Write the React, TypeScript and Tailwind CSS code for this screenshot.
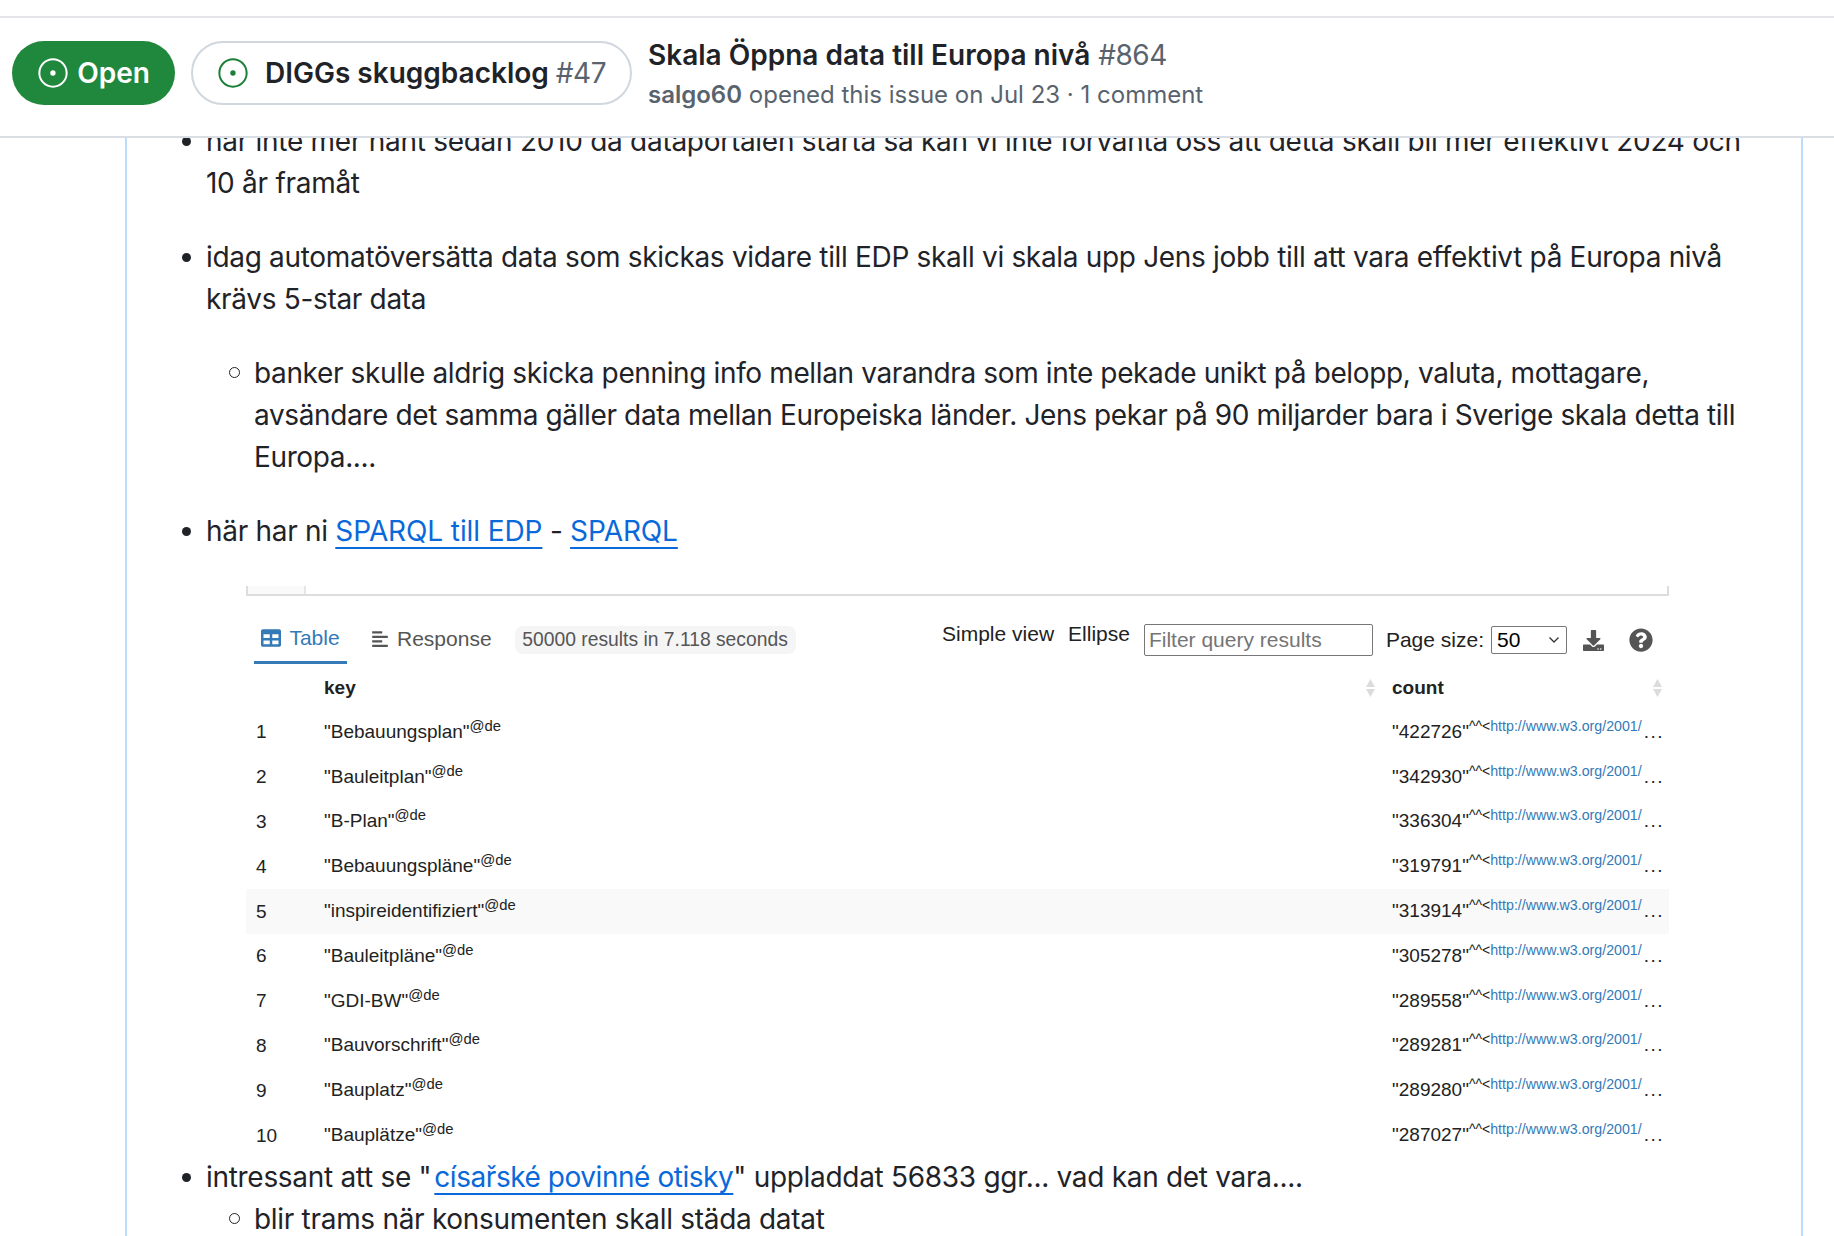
import React from 'react';
import { GoIssueOpened } from 'react-icons/go';
import { FaAlignLeft, FaDownload, FaQuestionCircle, FaTable } from 'react-icons/fa';

const rows = [
  { n: 1, key: 'Bebauungsplan', count: '422726' },
  { n: 2, key: 'Bauleitplan', count: '342930' },
  { n: 3, key: 'B-Plan', count: '336304' },
  { n: 4, key: 'Bebauungspläne', count: '319791' },
  { n: 5, key: 'inspireidentifiziert', count: '313914' },
  { n: 6, key: 'Bauleitpläne', count: '305278' },
  { n: 7, key: 'GDI-BW', count: '289558' },
  { n: 8, key: 'Bauvorschrift', count: '289281' },
  { n: 9, key: 'Bauplatz', count: '289280' },
  { n: 10, key: 'Bauplätze', count: '287027' },
];

const SortIcon = () => (
  <svg width="11" height="20" viewBox="0 0 11 20" className="shrink-0">
    <path d="M5.5 1 L10 9 H1 Z" fill="#dcdcdc" />
    <path d="M5.5 19 L10 11 H1 Z" fill="#dcdcdc" />
  </svg>
);

const ResultsTable = () => (
  <div className="ml-10 mt-[34px] w-[1423px] font-['Liberation_Sans',sans-serif] tracking-normal text-[#222]">
    <div className="flex h-[10px] border-x-2 border-b-2 border-[#dddddd]">
      <div className="w-[58px] border-r-2 border-[#e6e6e6] bg-[#fafafa]" />
    </div>

    <div className="flex h-[70px] items-center pl-2 pr-[16px]">
      <div className="flex h-[68px] w-[93px] items-center justify-center gap-2 self-start border-b-[3px] border-[#337ab7] pt-[18px] text-[21px] text-[#337ab7]">
        <FaTable size={20} />
        <span>Table</span>
      </div>
      <div className="ml-6 flex items-center gap-2 pt-[15px] text-[21px] text-[#555]">
        <FaAlignLeft size={18} />
        <span>Response</span>
      </div>
      <div className="ml-[23px] mt-[18px] flex h-[28px] w-[281px] items-center justify-center rounded-lg bg-[#f5f5f5] text-[19.3px] text-[#555]">
        50000 results in 7.118 seconds
      </div>
      <div className="ml-auto flex items-center pt-[18px]">
        <span className="mb-[12px] text-[21px]">Simple view</span>
        <span className="mb-[12px] ml-[14px] text-[21px]">Ellipse</span>
        <div className="ml-[14px] flex h-[32px] w-[229px] items-center rounded-[2px] border-[1.5px] border-[#777] pl-1 text-[21px] text-[#757575]">
          Filter query results
        </div>
        <span className="ml-[13px] text-[21px]">Page size:</span>
        <div className="ml-[7px] flex h-[28px] w-[76px] items-center justify-between rounded-[2px] border-[1.5px] border-[#777] pl-[5px] pr-[6px] text-[21px] text-black">
          <span>50</span>
          <svg width="12" height="8" viewBox="0 0 12 8" fill="none" stroke="#333" strokeWidth="1.3">
            <path d="M1.5 1.5 L6 6 L10.5 1.5" />
          </svg>
        </div>
        <FaDownload size={21} className="ml-[16px] text-[#555]" />
        <FaQuestionCircle size={24} className="ml-[25px] text-[#555]" />
      </div>
    </div>

    <div className="flex h-[44px] items-center text-[19px] font-bold">
      <div className="w-[78px]" />
      <div className="flex w-[1052px] items-center justify-between">
        <span>key</span>
        <SortIcon />
      </div>
      <div className="ml-[16px] flex w-[271px] items-center justify-between">
        <span>count</span>
        <SortIcon />
      </div>
    </div>

    {rows.map(row => (
      <div key={row.n} className={`flex h-[44.8px] items-center text-[19px] ${row.n === 5 ? 'bg-[#f9f9f9]' : ''}`}>
        <div className="w-[78px] pl-[10px]">{row.n}</div>
        <div className="w-[1068px]">
          "{row.key}"<span className="inline-block -translate-y-[7px] text-[14.8px]">@de</span>
        </div>
        <div className="flex w-[277px] items-baseline whitespace-nowrap">
          <span>"{row.count}"</span>
          <span className="-translate-y-[7px] text-[14px]">^^&lt;</span>
          <span className="-translate-y-[7px] text-[14.2px] text-[#337ab7]">http://www.w3.org/2001/</span>
          <span className="ml-[2px] tracking-[1.5px]">...</span>
        </div>
      </div>
    ))}
  </div>
);

const Bullet = ({ sub }: { sub?: boolean }) =>
  sub ? (
    <span className="mr-[14px] mt-[15px] h-[11px] w-[11px] shrink-0 rounded-full border-[1.5px] border-[#1f2328]" />
  ) : (
    <span className="mr-[15px] mt-[17px] h-[9px] w-[9px] shrink-0 rounded-full bg-[#1f2328]" />
  );

const linkClass = 'text-[#0969da] tracking-[-0.1px] underline decoration-2 underline-offset-[6px]';

const App: React.FC = () => {
  return (
    <div className="flex h-[1236px] flex-col overflow-hidden bg-white font-['Inter',sans-serif] text-[28px] leading-[42px] text-[#1f2328]">
      <div className="h-[18px] shrink-0 border-b-2 border-[#e3e5e8]" />

      <header className="z-10 flex h-[120px] shrink-0 items-center border-b-2 border-[#d8dee4] bg-white pb-[8px] pl-3">
        <div className="flex h-16 w-[163px] items-center justify-center gap-[8px] rounded-full bg-[#1f883d] text-[28px] font-semibold text-white">
          <GoIssueOpened size={32} />
          <span>Open</span>
        </div>
        <div className="ml-4 flex h-16 w-[441px] items-center rounded-full border-2 border-[#d0d7de] pl-[24px]">
          <GoIssueOpened size={32} className="text-[#1a7f37]" />
          <span className="ml-[16px] font-semibold">DIGGs skuggbacklog</span>
          <span className="ml-[7px] tracking-[-0.5px] text-[#59636e]">#47</span>
        </div>
        <div className="ml-4 flex flex-col pt-1">
          <div className="leading-[40px]">
            <span className="font-semibold">Skala Öppna data till Europa nivå</span>
            <span className="ml-2 tracking-[-0.5px] text-[#59636e]">#864</span>
          </div>
          <div className="text-[24px] leading-[40px] text-[#59636e]">
            <span className="font-semibold">salgo60</span> opened this issue on Jul 23 · 1 comment
          </div>
        </div>
      </header>

      <main className="ml-[125px] mr-[31px] grow border-x-2 border-[#bbdcfb] tracking-[-0.3px]">
        <div className="-mt-[18px] flex pl-[55px] pr-[31px] tracking-[-0.28px]">
          <Bullet />
          <p>har inte mer hänt sedan 2010 då dataportalen starta så kan vi inte förvänta oss att detta skall bli mer effektivt 2024 och 10 år framåt</p>
        </div>

        <div className="mt-8 flex pl-[55px] pr-[31px] tracking-[-0.32px]">
          <Bullet />
          <p>idag automatöversätta data som skickas vidare till EDP skall vi skala upp Jens jobb till att vara effektivt på Europa nivå krävs 5-star data</p>
        </div>

        <div className="mt-8 flex pl-[102px] pr-[31px] tracking-[-0.37px]">
          <Bullet sub />
          <p>banker skulle aldrig skicka penning info mellan varandra som inte pekade unikt på belopp, valuta, mottagare, avsändare det samma gäller data mellan Europeiska länder. Jens pekar på 90 miljarder bara i Sverige skala detta till Europa....</p>
        </div>

        <div className="mt-8 flex pl-[55px] pr-[31px]">
          <Bullet />
          <p>
            här har ni <a className={linkClass}>SPARQL till EDP</a> - <a className={linkClass}>SPARQL</a>
          </p>
        </div>

        <div className="pl-[79px]">
          <ResultsTable />
        </div>

        <div className="-mt-[2px] flex pl-[55px] pr-[31px]">
          <Bullet />
          <p>
            intressant att se "<a className="ml-[3px] text-[#0969da] tracking-[-0.45px] underline decoration-2 underline-offset-[6px]">císařské povinné otisky</a>" uppladdat 56833 ggr... vad kan det vara....
          </p>
        </div>
        <div className="flex pl-[102px] pr-[31px]">
          <Bullet sub />
          <p>blir trams när konsumenten skall städa datat</p>
        </div>
      </main>
    </div>
  );
};

export default App;
